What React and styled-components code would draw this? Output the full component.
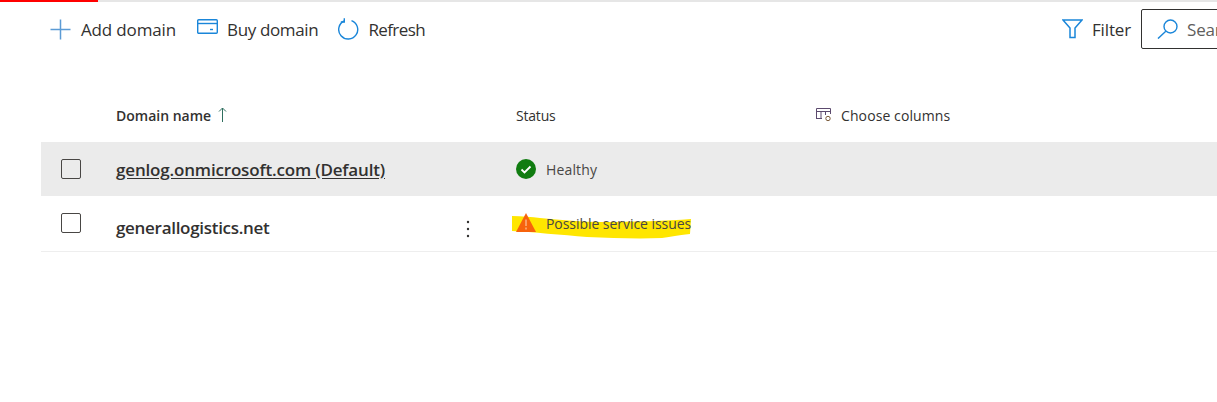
import React from "react";
import styled, { createGlobalStyle } from "styled-components";

const Global = createGlobalStyle`
  html, body { margin: 0; padding: 0; background: #fff; overflow: hidden; }
  body { font-family: "Open Sans", "Noto Sans", sans-serif; color: #323130; }
`;
const Page = styled.div`width: 1217px; height: 402px; overflow: hidden; background: #fff;`;
const Progress = styled.div`
  height: 2px; background: #e6e6e6;
  &::before { content: ""; display: block; width: 98px; height: 2px; background: #f00; }
`;
const Toolbar = styled.div`
  display: flex; align-items: center; height: 46px; margin-top: 4px; padding-left: 49px; font-size: 17px;
`;
const ToolButton = styled.div`
  display: flex; align-items: center; gap: ${p => p.$gap || 9}px; margin-right: ${p => p.$mr || 0}px; letter-spacing: ${p => p.$ls ?? -0.15}px; white-space: nowrap;
  svg { display: block; flex: none; }
`;
const BuyIcon = styled.svg`margin-top: -4px;`;
const Spacer = styled.div`flex: 1;`;
const Search = styled.div`
  flex: none; display: flex; align-items: center; gap: 8px; width: 73px; height: 38px; margin-left: 10px; margin-right: -14px; padding-left: 15px;
  border: 1px solid #323130; border-radius: 2px; color: #605e5c; overflow: hidden; letter-spacing: -0.15px; white-space: nowrap;
  svg { flex: none; }
`;
const Table = styled.div`margin: 41px 0 0 41px;`;
const Row = styled.div`
  display: grid; grid-template-columns: 75px 400px 300px 1fr; align-items: center; height: ${p => p.$h}px;
  background: ${p => p.$bg || "transparent"};
  border-bottom: ${p => p.$line ? "1px solid #eeeeee" : "none"};
  box-sizing: border-box;
`;
const HeadRow = styled(Row)`padding-bottom: 5px;`;
const HeadCell = styled.div`
  display: flex; align-items: center; gap: ${p => p.$gap || 7}px; font-size: 14px; letter-spacing: ${p => p.$ls ?? -0.2}px; font-weight: ${p => p.$w || 400};
  svg { display: block; flex: none; }
`;
const Check = styled.div`
  width: 18px; height: 18px; margin-left: 20px; border: 1px solid #484644; border-radius: 2px;
  position: relative; top: ${p => p.$top || 0}px;
`;
const NameCell = styled.div`
  position: relative; display: flex; align-items: center; justify-content: space-between; top: ${p => p.$top || 0}px; padding-right: 46px;
`;
const Name = styled.span`
  font-size: 17px; font-weight: 600; letter-spacing: ${p => p.$ls}px; color: #323130; text-decoration: ${p => p.$u ? "underline" : "none"}; text-underline-offset: 2px; white-space: nowrap;
`;
const Kebab = styled.svg`position: relative; top: 1px;`;
const StatusCell = styled.div`
  position: relative; display: flex; align-items: center; gap: 10px; font-size: 14px; letter-spacing: ${p => p.$ls}px; top: ${p => p.$top || 0}px;
  color: #484644; svg { flex: none; display: block; }
`;
const Highlight = styled.svg`position: absolute; left: -4px; top: -10px; z-index: 0;`;
const StatusText = styled.span`position: relative; z-index: 1;`;
const StatusIcon = styled.svg`position: relative; z-index: 1;`;
const WarningIcon = styled(StatusIcon)`top: -1px;`;

export default function App() {
  return (
    <Page>
      <Global />
      <Progress />
      <Toolbar>
        <ToolButton $mr={21}>
          <svg width="23" height="23" viewBox="0 0 23 23"><path d="M11.5 1.5v20M1.5 11.5h20" stroke="#5b9bd5" strokeWidth="1.5" /></svg>
          Add domain
        </ToolButton>
        <ToolButton $mr={20} $ls={-0.35}>
          <BuyIcon width="21" height="16" viewBox="0 0 21 16" fill="none" stroke="#1a86d9" strokeWidth="1.4"><rect x=".7" y=".7" width="19.6" height="13.6" rx="1" /><path d="M1 4.5h19" /><path d="M13 10.5h3" /></BuyIcon>
          Buy domain
        </ToolButton>
        <ToolButton $gap={9} $ls={-0.6}>
          <svg width="21" height="22" viewBox="0 0 21 22" fill="none" stroke="#1a86d9" strokeWidth="1.4"><path d="M13.5 2.6A9.5 9.5 0 1 1 6 3" /><path d="M6.3 .3 6.3 4 2.8 4" /></svg>
          Refresh
        </ToolButton>
        <Spacer />
        <ToolButton>
          <svg width="21" height="20" viewBox="0 0 21 20" fill="none" stroke="#1a86d9" strokeWidth="1.5"><path d="M1 1h19l-7 8v9.5H8V9z" /></svg>
          Filter
        </ToolButton>
        <Search>
          <svg width="22" height="20" viewBox="0 0 22 20" fill="none" stroke="#1a86d9" strokeWidth="1.4"><circle cx="13.5" cy="7.5" r="6.5" /><path d="M8.8 12.2 1 19.6" /></svg>
          Search
        </Search>
      </Toolbar>
      <Table>
        <HeadRow $h={49}>
          <span />
          <HeadCell $w={600} $ls={0}>
            Domain name
            <svg width="9" height="16" viewBox="0 0 9 16" fill="none" stroke="#2f6f5f" strokeWidth="1"><path d="M4.5 15V1M1 4.5 4.5 1 8 4.5" /></svg>
          </HeadCell>
          <HeadCell>Status</HeadCell>
          <HeadCell $gap={9} $ls={0.1}>
            <svg width="16" height="14" viewBox="0 0 16 14" fill="none" stroke="#5c4a6e" strokeWidth="1"><path d="M.5 11V.5h14V6M.5 3.5h14M5 4v7M9.5 4v3M.5 10.5H6" /><circle cx="12" cy="10.5" r="2.2" stroke="#7a5a3a" /></svg>
            Choose columns
          </HeadCell>
        </HeadRow>
        <Row $h={54} $bg="#ebebeb">
          <Check />
          <NameCell>
            <Name $u $ls={-0.17}>genlog.onmicrosoft.com (Default)</Name>
          </NameCell>
          <StatusCell $ls={0.15}>
            <StatusIcon width="20" height="20" viewBox="0 0 20 20"><circle cx="10" cy="10" r="10" fill="#107c10" /><path d="M5.5 10.5 8.5 13.5 14.5 7.5" fill="none" stroke="#fff" strokeWidth="1.8" /></StatusIcon>
            <StatusText>Healthy</StatusText>
          </StatusCell>
          <span />
        </Row>
        <Row $h={56} $line>
          <Check $top={-1} />
          <NameCell $top={4}>
            <Name $ls={-0.3}>generallogistics.net</Name>
            <Kebab width="4" height="20" viewBox="0 0 4 20" fill="#323130"><circle cx="2" cy="3" r="1.2" /><circle cx="2" cy="10" r="1.2" /><circle cx="2" cy="17" r="1.2" /></Kebab>
          </NameCell>
          <StatusCell $top={0} $ls={-0.05}>
            <Highlight width="190" height="40" viewBox="0 0 190 40"><path d="M0 12 C10 12 20 13 28 14 C50 16 70 18 90 18 C120 18 155 17 179 15 L178 30 C165 31 160 33 150 34 C125 35 100 34 75 33 C50 31 20 28 0 27 Z" fill="#ffe600" /></Highlight>
            <WarningIcon width="20" height="19" viewBox="0 0 20 19"><path d="M10 0 20 19H0z" fill="#f7630c" /><path d="M10 6.5v6.5M10 14.5v2" stroke="#ffd9b8" strokeWidth="1" /></WarningIcon>
            <StatusText>Possible service issues</StatusText>
          </StatusCell>
          <span />
        </Row>
      </Table>
    </Page>
  );
}
